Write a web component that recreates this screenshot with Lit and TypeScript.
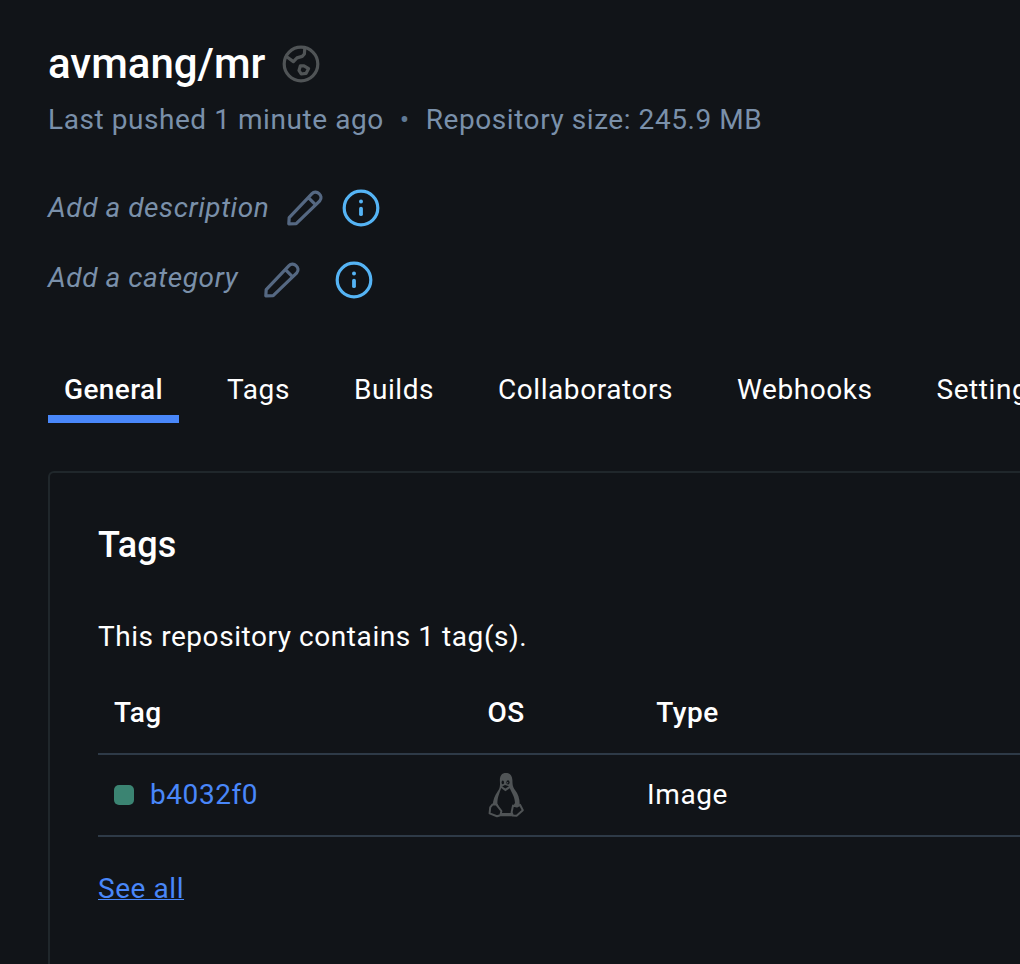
import { LitElement, html, css, svg } from "lit";
import { customElement } from "lit/decorators.js";

const globe = html`<svg width="38" height="38" viewBox="0 0 38 38" fill="none" stroke="#505456" stroke-width="3.2" stroke-linejoin="round">
  <circle cx="19" cy="19" r="16.8" />
  <path d="M4 11.2 L11.4 16.6 L15 12.9 L20.2 11.4 L22.4 9 L22.8 3" />
  <path d="M18.4 20.8 L22 20.8 L26.6 23.6 L24 28.4 L19.2 29 L17 25.4 Z" />
</svg>`;

const pencil = svg`<path d="M1.8 33.8 L2.2 27.6 L25 3.6 C29.2 -0.8 37 5.8 32.8 10.8 L9.2 33.6 Z M21.4 7.6 L28.4 14.6" />`;

const pencilIcon = html`<svg width="36" height="36" viewBox="0 0 36 36" fill="none" stroke="#556882" stroke-width="3.2" stroke-linejoin="round">${pencil}</svg>`;

const infoIcon = html`<svg width="38" height="38" viewBox="0 0 38 38" fill="none" stroke="#55b4f5">
  <circle cx="19" cy="19" r="16.8" stroke-width="3.2" />
  <path d="M19 19.6V25.2" stroke-width="3.8" stroke-linecap="round" />
  <circle cx="19" cy="12.4" r="2" fill="#55b4f5" stroke="none" />
</svg>`;

const tux = html`<svg width="36" height="46" viewBox="0 0 36 46" fill="none">
  <path fill="#505456" d="M18 1 C13.4 1 11.7 4 11.9 9 C12.2 14 12 16 9.6 19.5 C6.6 24 5 28 4.8 33 L9 37 L13 44.2 H25 L28 36 L31.6 33 C32 28 30.4 22 27 18 C24.4 14.5 24.6 12 24.4 8 C24.1 3.5 22 1 18 1 Z" />
  <path fill="#111418" d="M13.2 16 L17.4 19.2 L21.8 16.2 C23.8 21 27 25 27 31 L25 34 L24 41 H13.8 L9.4 31.6 C9.4 25 11.6 21 13.2 16 Z" />
  <g fill="#111418">
    <ellipse cx="14.8" cy="10.4" rx="1.2" ry="1.9" />
    <ellipse cx="20" cy="10.4" rx="1.6" ry="2.1" />
    <path d="M14.2 14.4 L17 13 L21 14.2 L17.4 16.4 Z" />
  </g>
  <circle cx="19.6" cy="10.8" r="0.7" fill="#505456" />
  <g fill="#111418" stroke="#505456" stroke-width="2" stroke-linejoin="round">
    <path d="M4.6 32.4 L8.2 32.4 L13.4 39 L12.4 43.2 L9 44.2 L1.6 41.4 L2.2 35.4 Z" />
    <path d="M25 33.6 L28.8 34.6 L32 32.8 L34.8 38.2 L28.6 43.8 L24.8 43.4 L23.6 40.4 Z" />
  </g>
</svg>`;

@customElement("app-root")
export class AppRoot extends LitElement {
  static styles = css`
    :host { display: block; height: 964px; overflow: hidden; background: #111418; color: #fff;
      font: 400 28px/40px Roboto, sans-serif; letter-spacing: 0.56px; white-space: nowrap; }
    .page { padding: 40px 0 0 48px; }
    .head, .edit, .tabs, .tag { display: flex; align-items: center; }
    .head { height: 48px; gap: 17px; }
    h1 { margin: 0; font-size: 42px; font-weight: 500; letter-spacing: 0; line-height: 48px; }
    svg { display: block; flex: none; }
    .meta { display: flex; margin-top: 12px; color: #7a90aa; }
    .dot { width: 42px; text-align: center; color: #607a96; }
    .edit { height: 40px; color: #7a90aa; font-style: italic; }
    .desc { margin-top: 48px; }
    .cat { margin-top: 30px; }
    .label { width: 239px; }
    .cat .label { width: 216px; }
    .edit svg + svg { margin-left: 19px; }
    .cat svg + svg { margin-left: 35px; }
    .cat svg { margin-top: 4px; }
    .tabs { margin-top: 64px; height: 61px; align-items: stretch; gap: 32px; }
    .item { flex: none; box-sizing: border-box; padding: 8px 16px 0; }
    .on { font-weight: 500; letter-spacing: 0.4px; border-bottom: 8px solid #4987f9; }
    .card { margin-top: 48px; height: 520px; border: 2px solid #20272b; border-right: 0; border-radius: 6px 0 0; padding: 48px 0 0 48px; }
    h2 { margin: 0; font-size: 36px; font-weight: 500; line-height: 48px; letter-spacing: 0.1px; }
    .count { margin-top: 48px; }
    .cells { display: grid; align-items: center; grid-template-columns: 341px 134px 1fr; border-bottom: 2px solid #2e3a47; height: 80px; }
    .cells > :first-child { padding-left: 16px; }
    .th { margin-top: 16px; font-weight: 500; letter-spacing: 0.5px; }
    .t { width: 229px; text-align: center; }
    .sq { width: 20px; height: 20px; border-radius: 5px; background: #3b8472; margin-right: 16px; }
    .mid { display: flex; justify-content: center; }
    a { color: #4987f9; }
    .all { display: inline-block; margin-top: 32px; text-decoration: underline; text-decoration-thickness: 1px; }
  `;

  render() {
    return html`<main class="page">
      <div class="head"><h1>avmang/mr</h1>${globe}</div>
      <div class="meta"><span>Last pushed 1 minute ago</span><span class="dot">•</span><span>Repository size: 245.9 MB</span></div>
      <div class="edit desc"><span class="label">Add a description</span>${pencilIcon}${infoIcon}</div>
      <div class="edit cat"><span class="label">Add a category</span>${pencilIcon}${infoIcon}</div>
      <nav class="tabs">
        ${["General", "Tags", "Builds", "Collaborators", "Webhooks", "Settings"].map(
          (t, i) => html`<span class="item ${i === 0 ? "on" : ""}">${t}</span>`
        )}
      </nav>
      <section class="card">
        <h2>Tags</h2>
        <div class="count">This repository contains 1 tag(s).</div>
        <div class="cells th"><span>Tag</span><span class="mid">OS</span><span class="t">Type</span></div>
        <div class="cells"><span class="tag"><i class="sq"></i><a>b4032f0</a></span><span class="mid">${tux}</span><span class="t">Image</span></div>
        <a class="all">See all</a>
      </section>
    </main>`;
  }
}
